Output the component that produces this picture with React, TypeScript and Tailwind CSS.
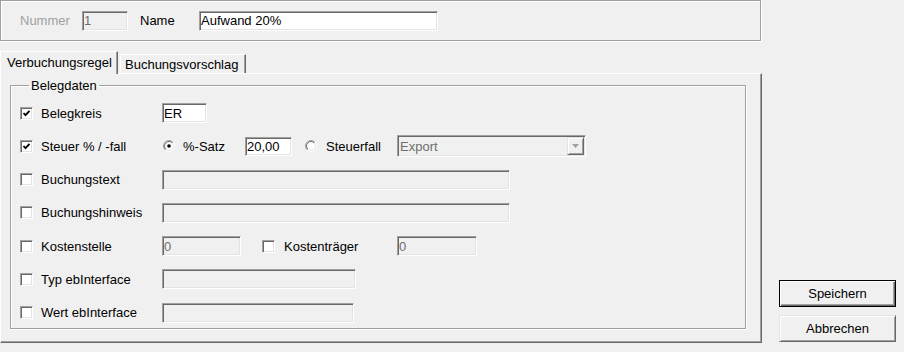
import React from 'react';

const sunken =
  'border border-t-[#a0a0a0] border-l-[#a0a0a0] border-b-white border-r-white shadow-[inset_1px_1px_0_#696969,inset_-1px_-1px_0_#e3e3e3]';

const Check: React.FC<{ checked?: boolean }> = ({ checked }) => (
  <span className={`w-[13px] h-[13px] shrink-0 bg-white flex items-center justify-center ${sunken}`}>
    {checked && (
      <svg width="9" height="9" viewBox="0 0 9 9">
        <polyline points="1.5,4 3.5,6.2 7.5,1.8" fill="none" stroke="#000" strokeWidth="1.8" />
      </svg>
    )}
  </span>
);

const Radio: React.FC<{ checked?: boolean }> = ({ checked }) => (
  <svg width="12" height="12" viewBox="0 0 12 12" className="shrink-0">
    <defs>
      <linearGradient id="rOuter" x1="0" y1="0" x2="1" y2="1">
        <stop offset="0.5" stopColor="#a0a0a0" />
        <stop offset="0.5" stopColor="#ffffff" />
      </linearGradient>
      <linearGradient id="rInner" x1="0" y1="0" x2="1" y2="1">
        <stop offset="0.5" stopColor="#696969" />
        <stop offset="0.5" stopColor="#e3e3e3" />
      </linearGradient>
    </defs>
    <circle cx="6" cy="6" r="5.5" fill="none" stroke="url(#rOuter)" strokeWidth="1" />
    <circle cx="6" cy="6" r="4.5" fill="#fff" stroke="url(#rInner)" strokeWidth="1" />
    {checked && <circle cx="6" cy="6" r="1.8" fill="#000" />}
  </svg>
);

const Field: React.FC<{ w: string; value?: string; disabled?: boolean; h?: string }> = ({
  w,
  value,
  disabled,
  h = 'h-[20px]',
}) => (
  <div
    className={`${w} ${h} shrink-0 flex items-center pl-[1px] ${sunken} ${
      disabled ? 'bg-[#f0f0f0] text-[#6d6d6d]' : 'bg-white text-black'
    }`}
  >
    {value}
  </div>
);

const Row: React.FC<{ checked?: boolean; label: string; children?: React.ReactNode }> = ({
  checked,
  label,
  children,
}) => (
  <div className="h-[20px] flex items-center">
    <Check checked={checked} />
    <span className="w-[129px] pl-[8px] shrink-0">{label}</span>
    {children}
  </div>
);

const App: React.FC = () => {
  return (
    <div className="w-[904px] h-[352px] bg-[#f0f0f0] flex overflow-hidden text-[13px] leading-none text-black font-['Liberation_Sans',Arial,sans-serif]">
      <div className="w-[763px] flex flex-col shrink-0">
        {/* header panel */}
        <div className="w-[761px] h-[41px] border border-[#a0a0a0] shadow-[inset_1px_1px_0_#fff,1px_1px_0_#fff] flex items-center pl-[19px]">
          <span className="w-[62px] text-[#a0a0a0]">Nummer</span>
          <Field w="w-[46px]" value="1" disabled />
          <span className="w-[59px] ml-[12px]">Name</span>
          <Field w="w-[239px]" value="Aufwand 20%" />
        </div>

        {/* tabs */}
        <div className="h-[22px] mt-[10px] flex items-end relative z-10">
          <div className="h-[23px] -mb-[1px] w-[118px] bg-[#f0f0f0] border-t border-l border-white border-r border-r-[#696969] shadow-[inset_-1px_0_0_#a0a0a0] flex items-center pl-[6px] pb-[2px]">
            Verbuchungsregel
          </div>
          <div className="h-[19px] ml-[2px] w-[126px] border-t border-l border-white border-r border-r-[#696969] shadow-[inset_-1px_0_0_#a0a0a0] flex items-center pl-[4px]">
            Buchungsvorschlag
          </div>
        </div>

        {/* tab panel */}
        <div className="w-[762px] h-[270px] border border-t-white border-l-white border-b-[#696969] border-r-[#696969] shadow-[inset_-1px_-1px_0_#a0a0a0] pl-[9px] pr-[15px] pt-[4px]">
          <fieldset className="h-[251px] border border-[#a0a0a0] shadow-[inset_1px_1px_0_#fff,1px_1px_0_#fff] pl-[9px] pt-[10px]">
            <legend className="ml-[9px] px-[2px] leading-[15px]">Belegdaten</legend>
            <div className="flex flex-col gap-[13.3px]">
              <Row checked label="Belegkreis">
                <Field w="w-[45px]" value="ER" />
              </Row>
              <Row checked label="Steuer % / -fall">
                <span className="ml-[1px]">
                  <Radio checked />
                </span>
                <span className="w-[70px] pl-[8px] shrink-0">%-Satz</span>
                <Field w="w-[47px]" h="h-[19px]" value="20,00" />
                <span className="ml-[13px]">
                  <Radio />
                </span>
                <span className="w-[80px] pl-[9px] shrink-0">Steuerfall</span>
                <div className={`w-[189px] h-[22px] flex items-center bg-[#f0f0f0] text-[#6d6d6d] ${sunken}`}>
                  <span className="flex-1 pl-[2px]">Export</span>
                  <span className="w-[17px] h-[18px] mr-[1px] border border-t-[#e3e3e3] border-l-[#e3e3e3] border-b-[#696969] border-r-[#696969] shadow-[inset_1px_1px_0_#fff,inset_-1px_-1px_0_#a0a0a0] flex items-center justify-center">
                    <svg width="7" height="4" viewBox="0 0 7 4">
                      <polygon points="0,0 7,0 3.5,4" fill="#a0a0a0" />
                    </svg>
                  </span>
                </div>
              </Row>
              <Row label="Buchungstext">
                <Field w="w-[348px]" disabled />
              </Row>
              <Row label="Buchungshinweis">
                <Field w="w-[348px]" disabled />
              </Row>
              <Row label="Kostenstelle">
                <Field w="w-[79px]" value="0" disabled />
                <span className="ml-[21px]">
                  <Check />
                </span>
                <span className="w-[122px] pl-[9px] shrink-0">Kostenträger</span>
                <Field w="w-[80px]" value="0" disabled />
              </Row>
              <Row label="Typ ebInterface">
                <Field w="w-[194px]" disabled />
              </Row>
              <Row label="Wert ebInterface">
                <Field w="w-[192px]" disabled />
              </Row>
            </div>
          </fieldset>
        </div>
      </div>

      {/* buttons */}
      <div className="flex-1 flex flex-col justify-end gap-[8px] pb-[10px] pl-[16px]">
        <button className="w-[117px] h-[27px] border border-black shadow-[inset_1px_1px_0_#fff,inset_-1px_-1px_0_#696969,inset_-2px_-2px_0_#a0a0a0] bg-[#f0f0f0] flex items-center justify-center">
          Speichern
        </button>
        <button className="w-[117px] h-[27px] border border-t-[#e3e3e3] border-l-[#e3e3e3] border-b-[#696969] border-r-[#696969] shadow-[inset_1px_1px_0_#fff,inset_-1px_-1px_0_#a0a0a0] bg-[#f0f0f0] flex items-center justify-center">
          Abbrechen
        </button>
      </div>
    </div>
  );
};

export default App;
